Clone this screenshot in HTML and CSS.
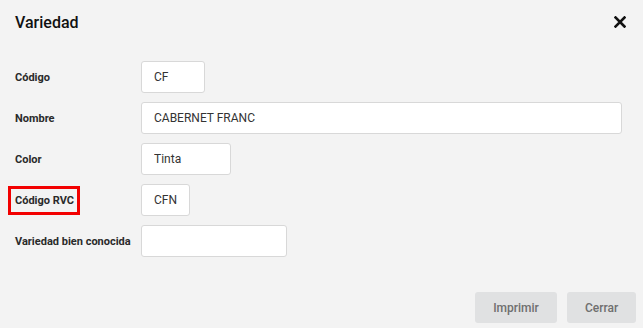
FILE: index.html
```html
<!DOCTYPE html>
<html lang="es">
<head>
    <meta charset="UTF-8" />
    <meta name="viewport" content="width=device-width, initial-scale=1" />
    <title>Variedad</title>
    <link rel="stylesheet" href="styles.css">
</head>
<body>

<div class="modal">
    <div class="modal-header">
        <h2>Variedad</h2>
        <button class="close-btn" aria-label="Cerrar">
            <svg width="12" height="12" viewBox="0 0 12 12">
                <path d="M1.5 1.5 L10.5 10.5 M10.5 1.5 L1.5 10.5" stroke="#111" stroke-width="2.6" stroke-linecap="square" />
            </svg>
        </button>
    </div>

    <div class="form">
        <label for="codigo">Código</label>
        <input id="codigo" class="w-xs" type="text" value="CF" />

        <label for="nombre">Nombre</label>
        <input id="nombre" class="w-full" type="text" value="CABERNET FRANC" />

        <label for="color">Color</label>
        <input id="color" class="w-sm" type="text" value="Tinta" />

        <label for="rvc"><span class="highlight">Código RVC</span></label>
        <input id="rvc" class="w-xxs" type="text" value="CFN" />

        <label for="conocida">Variedad bien conocida</label>
        <input id="conocida" class="w-md" type="text" value="" />
    </div>

    <div class="modal-footer">
        <button class="btn">Imprimir</button>
        <button class="btn">Cerrar</button>
    </div>
</div>

</body>
</html>
```

FILE: styles.css
```css
* {
    box-sizing: border-box;
    margin: 0;
    padding: 0;
}
body {
    font-family: Roboto, 'Liberation Sans', sans-serif;
    background: #f3f3f3;
    color: #222;
}
.modal {
    width: 643px;
    height: 328px;
}
.modal-header {
    display: flex;
    justify-content: space-between;
    align-items: center;
    height: 44px;
    padding: 1px 17px 0 15px;
}
.modal-header h2 {
    font-size: 16px;
    font-weight: 500;
    color: #111;
}
.close-btn {
    background: none;
    border: none;
    cursor: pointer;
    display: flex;
    margin-top: -2px;
}
.form {
    display: grid;
    grid-template-columns: 126px 1fr;
    row-gap: 9px;
    align-items: center;
    padding: 17px 21px 0 15px;
}
.form label {
    font-size: 11px;
    font-weight: 700;
    color: #2a2a2a;
}
.highlight {
    display: inline-block;
    margin-left: -7px;
    padding: 5px 3px 5px 4px;
    border: 3px solid #f20000;
}
.form input {
    height: 32px;
    padding: 0 12px;
    border: 1px solid #d8d8d8;
    border-radius: 3px;
    background: #fff;
    font-family: inherit;
    font-size: 12px;
    color: #333;
    outline: none;
}
.w-xxs { width: 49px; }
.w-xs { width: 64px; }
.w-sm { width: 90px; }
.w-md { width: 146px; }
.w-full { width: 100%; }
.modal-footer {
    display: flex;
    justify-content: flex-end;
    gap: 10px;
    margin-top: 35px;
    padding-right: 7px;
}
.btn {
    height: 31px;
    padding: 0 15px;
    border: none;
    border-radius: 3px;
    background: #e0e1e2;
    font-family: inherit;
    font-size: 12px;
    font-weight: 500;
    color: #6f6f6f;
    cursor: pointer;
}
.btn:first-child {
    width: 82px;
}
.btn:last-child {
    width: 69px;
}
```
